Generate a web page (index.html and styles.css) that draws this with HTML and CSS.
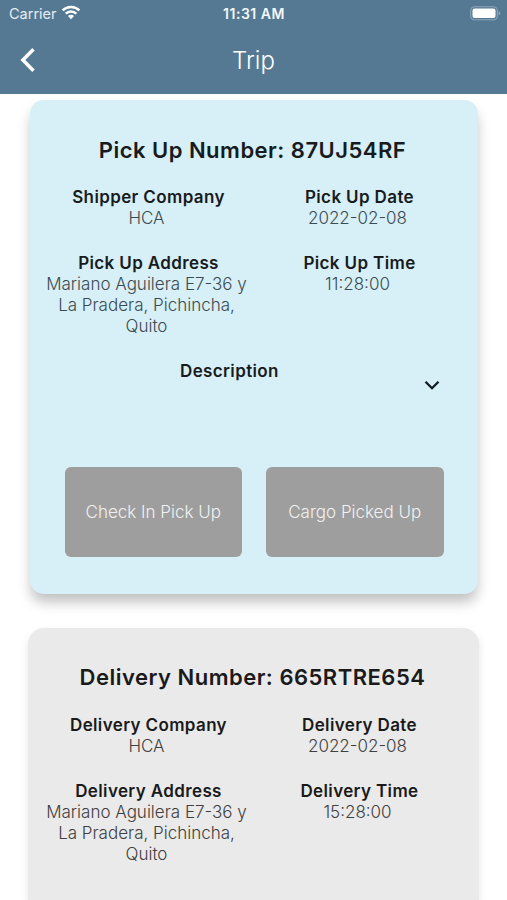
FILE: index.html
```html
<!DOCTYPE html>
<html lang="en">
<head>
<meta charset="utf-8">
<title>Trip</title>
<link rel="stylesheet" href="styles.css">
</head>
<body>
<header class="header">
  <div class="status">
    <div class="carrier"><span>Carrier</span>
      <svg class="wifi" viewBox="0 0 20 15" width="20" height="15"><path d="M1.600 5.400a12 12 0 0 1 16.800 0M4.700 8.600a7.600 7.600 0 0 1 10.600 0" fill="none" stroke="#fff" stroke-width="2.500"/><path d="M10 14.200 6.900 11.100a4.500 4.500 0 0 1 6.200 0z" fill="#fff"/></svg>
    </div>
    <div class="clock">11:31 AM</div>
    <svg class="battery" viewBox="0 0 31 15" width="31" height="15"><rect x=".7" y=".7" width="26.600" height="13.100" rx="3.800" fill="none" stroke="#8fa7b9" stroke-width="1.100"/><rect x="2.500" y="2.500" width="23" height="9.500" rx="2" fill="#fff"/><path d="M28.700 5v4.500q1.700-.7 1.700-2.200T28.700 5z" fill="#8fa7b9"/></svg>
  </div>
  <nav class="nav">
    <svg class="back" viewBox="0 0 16 26" width="16" height="26"><path d="M13.500 2.200 2.900 13l10.600 10.800" fill="none" stroke="#fff" stroke-width="3.500"/></svg>
    <h1 class="nav-title">Trip</h1>
  </nav>
</header>
<main class="list">
  <section class="card pickup">
    <h2 class="title">Pick Up Number: 87UJ54RF</h2>
    <div class="fields">
      <div class="field"><h3 class="label">Shipper Company</h3><p class="value">HCA</p></div>
      <div class="field"><h3 class="label">Pick Up Date</h3><p class="value">2022-02-08</p></div>
      <div class="field"><h3 class="label">Pick Up Address</h3><p class="value">Mariano Aguilera E7-36 y La Pradera, Pichincha, Quito</p></div>
      <div class="field"><h3 class="label">Pick Up Time</h3><p class="value">11:28:00</p></div>
    </div>
    <div class="description">
      <h3 class="label">Description</h3>
      <svg class="chevron" viewBox="0 0 16 11" width="16" height="11"><path d="M1.500 1.700 8 8.200l6.500-6.500" fill="none" stroke="#0e1c21" stroke-width="2.300"/></svg>
    </div>
    <div class="actions">
      <button class="action">Check In Pick Up</button>
      <button class="action">Cargo Picked Up</button>
    </div>
  </section>
  <section class="card delivery">
    <h2 class="title">Delivery Number: 665RTRE654</h2>
    <div class="fields">
      <div class="field"><h3 class="label">Delivery Company</h3><p class="value">HCA</p></div>
      <div class="field"><h3 class="label">Delivery Date</h3><p class="value">2022-02-08</p></div>
      <div class="field"><h3 class="label">Delivery Address</h3><p class="value">Mariano Aguilera E7-36 y La Pradera, Pichincha, Quito</p></div>
      <div class="field"><h3 class="label">Delivery Time</h3><p class="value">15:28:00</p></div>
    </div>
  </section>
</main>
</body>
</html>
```
FILE: styles.css
```css
* { box-sizing: border-box; }
body { display: flex; flex-direction: column; margin: 0; height: 900px; overflow: hidden; background: #fff; font-family: Inter, sans-serif; color: #171b1e; }
h1, h2, h3, p { margin: 0; }
svg { display: block; flex: none; }

.header { flex: none; height: 94px; background: #557993; color: #fff; }
.status { display: grid; grid-template-columns: 1fr auto 1fr; align-items: center; height: 27px; padding: 0 6px 0 9px; }
.carrier { display: flex; align-items: center; gap: 4px; font-size: 14.5px; color: #e6edf2; }
.wifi { margin-top: -2px; }
.clock { margin-left: -2px; font-size: 14px; font-weight: 600; letter-spacing: .5px; color: #f3f7fa; }
.battery { justify-self: end; }
.nav { display: grid; grid-template-columns: 1fr auto 1fr; align-items: center; height: 66px; padding: 0 20px; }
.nav-title { padding-top: 1px; font-size: 24px; line-height: 30px; font-weight: 300; }

.list { flex: 1; display: flex; flex-direction: column; gap: 34px; padding: 6px 28px 0; }
.card { border-radius: 14px; }
.pickup { height: 494px; margin: 0 1px 0 2px; background: #d7eff6; box-shadow: 0 9px 13px -1px rgba(0, 0, 0, .25); }
.delivery { flex: 1; border-radius: 16px 16px 0 0; background: #eaeaea; color: #1a1a1a; box-shadow: 0 4px 8px rgba(0, 0, 0, .1); }
.pickup .fields { padding-left: 11px; }
.delivery .fields { margin-top: 24px; padding-left: 13px; }
.title { padding: 36px 3px 0 0; text-align: center; font-size: 22px; line-height: 28px; font-weight: 600; letter-spacing: .49px; }
.delivery .title { padding-top: 35px; padding-right: 2px; }
.fields { display: grid; grid-template-columns: 211px 211px; row-gap: 24.3px; margin-top: 23px; }
.field { text-align: center; }
.label { font-size: 17px; line-height: 20.7px; font-weight: 600; letter-spacing: .37px; }
.field .label { padding-left: 4px; }
.value { font-size: 17px; line-height: 21px; font-weight: 300; color: #404040; }
.pickup .value { color: #3b4b52; }
.description { display: flex; align-items: flex-start; justify-content: space-between; margin-top: 23.900px; padding: 0 38px 0 150px; height: 106px; }
.chevron { margin-top: 19px; }
.actions { display: flex; gap: 24px; padding-left: 34.500px; }
.action { width: 177.500px; height: 90px; padding: 0; border: 0; border-radius: 6px; background: #9e9e9e; color: #f1f1f1; font: 300 17px Inter, sans-serif; }
```
